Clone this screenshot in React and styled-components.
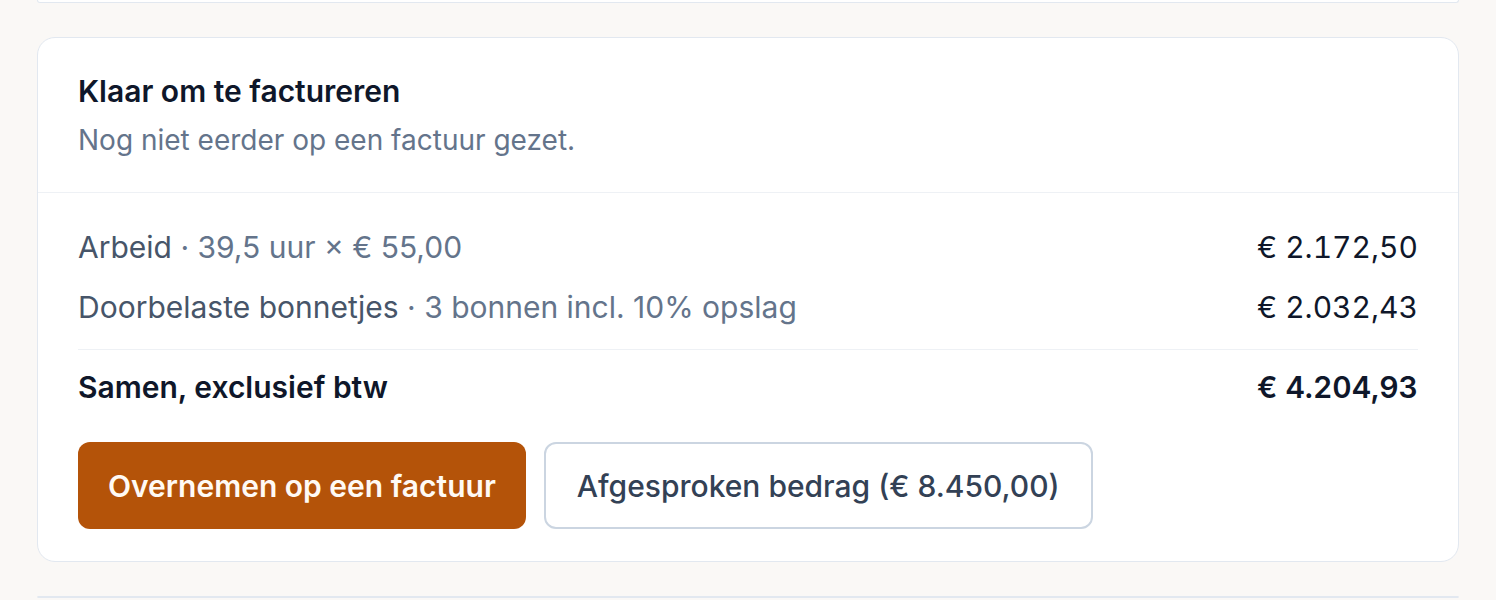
import React from "react";
import styled, { createGlobalStyle } from "styled-components";

const Global = createGlobalStyle`
  * { box-sizing: border-box; }
  html, body { margin: 0; padding: 0; background: #faf8f6; }
  body { font-family: Inter, "Noto Sans", sans-serif; -webkit-font-smoothing: antialiased; }
`;

const Page = styled.div`
  display: flex;
  flex-direction: column;
  gap: 34px;
  padding: 0 37px;
  min-height: 600px;
`;

const PrevCardEdge = styled.div`
  height: 3px;
  background: #fff;
  border: 1px solid #e2e8f0;
  border-top: none;
  border-radius: 0 0 18px 18px;
`;

const Card = styled.section`
  background: #fff;
  border: 1px solid #e2e8f0;
  border-radius: 18px;
  overflow: hidden;
`;

const Header = styled.header`
  padding: 35px 40px 32px;
  border-bottom: 1px solid #eef1f5;
  display: flex;
  flex-direction: column;
  gap: 11px;
`;

const Title = styled.h2`
  margin: 0;
  font-size: 30px;
  line-height: 36px;
  font-weight: 600;
  color: #0f172a;
`;

const Subtitle = styled.p`
  margin: 0;
  font-size: 28px;
  line-height: 40px;
  color: #64748b;
`;

const Body = styled.div`
  padding: 24px 40px 32px;
  display: flex;
  flex-direction: column;
`;

const Row = styled.div`
  display: flex;
  justify-content: space-between;
  align-items: center;
  height: 60px;
  font-size: 30px;
  color: ${(p) => (p.$total ? "#0f172a" : "#64748b")};
  font-weight: ${(p) => (p.$total ? 600 : 400)};
`;

const Label = styled.span`
  color: ${(p) => (p.$strong ? "#0f172a" : "#475569")};
`;

const Amount = styled.span`
  color: #0f172a;
  font-variant-numeric: tabular-nums;
`;

const Divider = styled.hr`
  margin: 12px 0 7px;
  border: none;
  border-top: 1px solid #eef1f5;
`;

const Actions = styled.div`
  display: flex;
  gap: 18px;
  margin-top: 25px;
`;

const Button = styled.button`
  height: 87px;
  padding: 0 ${(p) => (p.$primary ? 30 : 31)}px;
  border-radius: 12px;
  font-family: inherit;
  font-size: 30px;
  font-weight: ${(p) => (p.$primary ? 600 : 500)};
  cursor: pointer;
  background: ${(p) => (p.$primary ? "#b45309" : "#fff")};
  color: ${(p) => (p.$primary ? "#fffaf5" : "#334155")};
  border: ${(p) => (p.$primary ? "none" : "2px solid #cbd5e1")};
`;

export default function App() {
  return (
    <>
      <Global />
      <Page>
        <PrevCardEdge />
        <Card>
          <Header>
            <Title>Klaar om te factureren</Title>
            <Subtitle>Nog niet eerder op een factuur gezet.</Subtitle>
          </Header>
          <Body>
            <Row>
              <span>
                <Label>Arbeid</Label> · 39,5 uur × € 55,00
              </span>
              <Amount>€ 2.172,50</Amount>
            </Row>
            <Row>
              <span>
                <Label>Doorbelaste bonnetjes</Label> · 3 bonnen incl. 10% opslag
              </span>
              <Amount>€ 2.032,43</Amount>
            </Row>
            <Divider />
            <Row $total>
              <Label $strong>Samen, exclusief btw</Label>
              <Amount>€ 4.204,93</Amount>
            </Row>
            <Actions>
              <Button $primary>Overnemen op een factuur</Button>
              <Button>Afgesproken bedrag (€ 8.450,00)</Button>
            </Actions>
          </Body>
        </Card>
        <Card />
      </Page>
    </>
  );
}
